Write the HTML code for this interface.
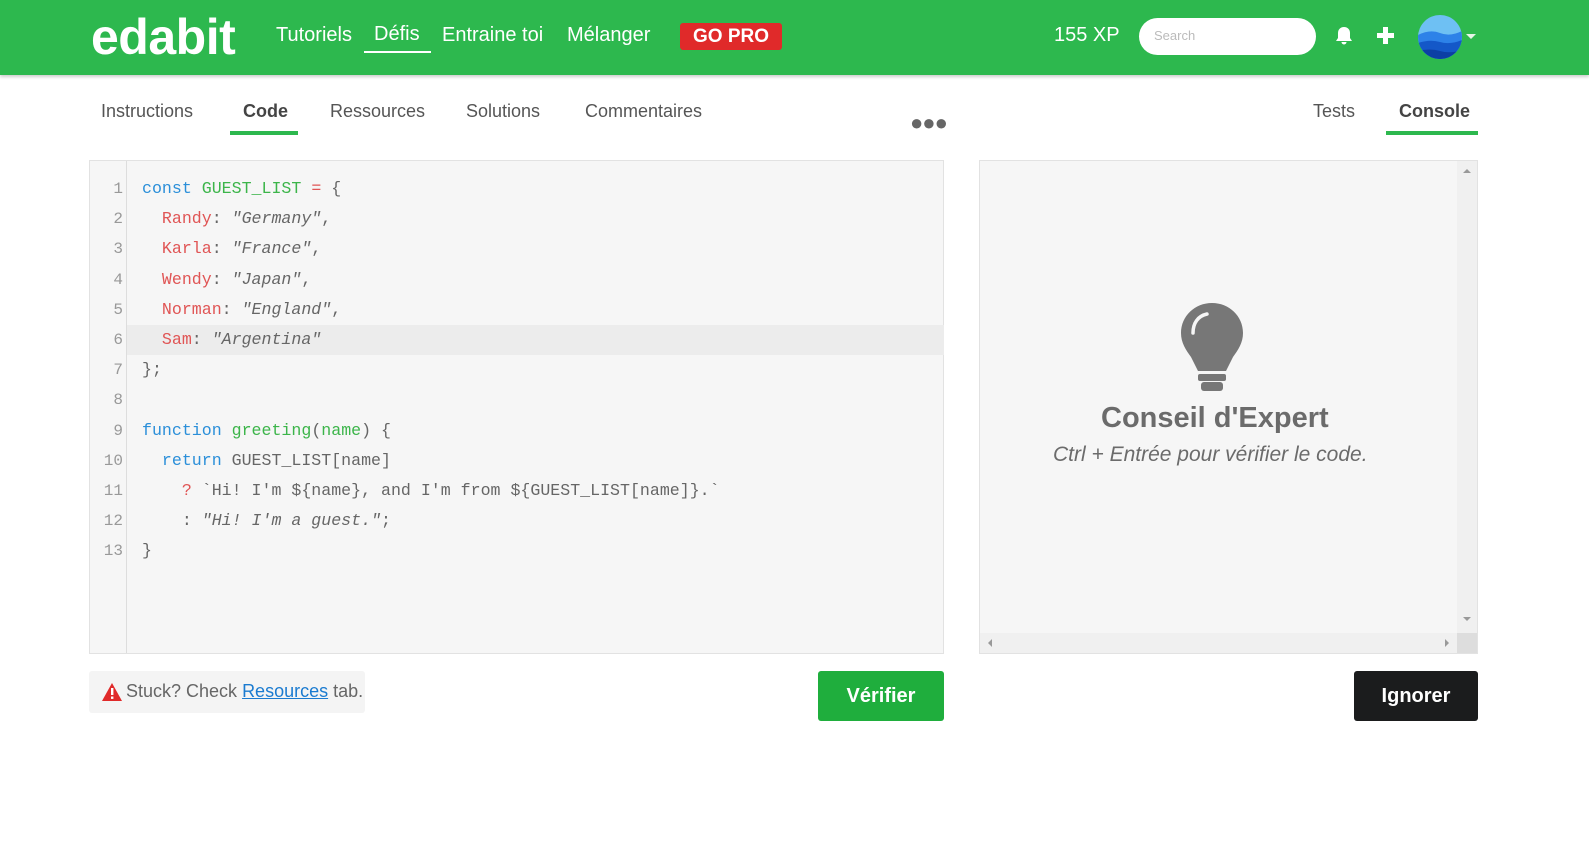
<!DOCTYPE html>
<html><head><meta charset="utf-8"><style>
*{margin:0;padding:0;box-sizing:border-box}
body{width:1589px;height:857px;background:#fff;font-family:"Liberation Sans",sans-serif;position:relative;overflow:hidden}
.hdr{position:absolute;left:0;top:0;width:1589px;height:75px;background:#2db84e;box-shadow:0 2px 3px rgba(0,0,0,.2)}
.abs{position:absolute;white-space:nowrap}
.logo{left:91px;top:8px;font-size:50px;font-weight:bold;color:#fff;letter-spacing:-0.5px}
.nav{top:24px;font-size:20px;color:#fff}
.gopro{left:680px;top:23px;width:102px;height:27px;background:#e02a2a;border-radius:3px;color:#fff;font-weight:bold;font-size:19px;text-align:center;line-height:27px}
.search{left:1139px;top:18px;width:177px;height:37px;background:#fff;border-radius:19px;color:#bbb;font-size:13px;padding:10px 15px}
.tab{top:101px;font-size:18px;color:#555}
.code{left:89px;top:160px;width:855px;height:494px;background:#f6f6f6;border:1px solid #e2e2e2}
.gut{position:absolute;left:0;top:0;width:37px;height:100%;border-right:1px solid #ddd}
.ln{position:absolute;left:0;width:33px;text-align:right;font-family:"Liberation Mono",monospace;font-size:16px;color:#999}
.cl{position:absolute;left:52px;font-family:"Liberation Mono",monospace;font-size:16.6px;color:#666;white-space:pre}
.k{color:#2b8fd9}.g{color:#3cb54a}.r{color:#e05555}.s{font-style:italic;color:#666}
.con{left:979px;top:160px;width:499px;height:494px;background:#f6f6f6;border:1px solid #e2e2e2}
.btn{height:50px;border-radius:3px;color:#fff;font-size:20px;font-weight:bold;text-align:center;line-height:50px}
</style></head><body>
<div class="hdr"></div>
<div class="abs logo">edabit</div>
<div class="abs nav" style="left:276px">Tutoriels</div>
<div class="abs nav" style="left:374px;top:23px">Défis</div>
<div class="abs" style="left:364px;top:51px;width:67px;height:2px;background:#fff"></div>
<div class="abs nav" style="left:442px">Entraine toi</div>
<div class="abs nav" style="left:567px">Mélanger</div>
<div class="abs gopro">GO PRO</div>
<div class="abs nav" style="left:1054px">155 XP</div>
<div class="abs search">Search</div>
<svg class="abs" style="left:1335px;top:26px" width="18" height="20" viewBox="0 0 18 20"><path d="M9 1c-4 0-6 3-6 6v5l-2 3h16l-2-3V7c0-3-2-6-6-6zM6.5 16a2.5 2.5 0 0 0 5 0z" fill="#fff"/></svg>
<svg class="abs" style="left:1377px;top:27px" width="17" height="17"><rect x="6" y="0" width="5" height="17" fill="#fff"/><rect x="0" y="6" width="17" height="5" fill="#fff"/></svg>
<svg class="abs" style="left:1418px;top:15px" width="62" height="44"><defs><clipPath id="c"><circle cx="22" cy="22" r="22"/></clipPath></defs><g clip-path="url(#c)"><rect width="44" height="44" fill="#6ec0f3"/><path d="M0 20q12-6 22-2t22-2v30H0z" fill="#2d82e8"/><path d="M0 28q12-4 22-1t22-2v20H0z" fill="#1458c8"/><path d="M0 36q12-3 22 0t22-1v10H0z" fill="#0c3fa4"/></g><path d="M48 19h10l-5 5z" fill="#e5f5e8"/></svg>
<div class="abs tab" style="left:101px">Instructions</div>
<div class="abs tab" style="left:243px;color:#444;font-weight:bold">Code</div>
<div class="abs" style="left:230px;top:131px;width:68px;height:4px;background:#2db84e"></div>
<div class="abs tab" style="left:330px">Ressources</div>
<div class="abs tab" style="left:466px">Solutions</div>
<div class="abs tab" style="left:585px">Commentaires</div>
<div class="abs" style="left:910px;top:110px;font-size:22px;color:#666;letter-spacing:-1px">●●●</div>
<div class="abs tab" style="left:1313px">Tests</div>
<div class="abs tab" style="left:1399px;color:#444;font-weight:bold">Console</div>
<div class="abs" style="left:1386px;top:131px;width:92px;height:4px;background:#2db84e"></div>
<div class="abs code">
<div style="position:absolute;left:37px;top:164px;width:817px;height:30px;background:#ececec"></div>
<div class="gut"></div>
<div class="ln" style="top:19px">1</div><div class="ln" style="top:49px">2</div><div class="ln" style="top:79px">3</div><div class="ln" style="top:110px">4</div><div class="ln" style="top:140px">5</div><div class="ln" style="top:170px">6</div><div class="ln" style="top:200px">7</div><div class="ln" style="top:230px">8</div><div class="ln" style="top:261px">9</div><div class="ln" style="top:291px">10</div><div class="ln" style="top:321px">11</div><div class="ln" style="top:351px">12</div><div class="ln" style="top:381px">13</div>
<div class="cl" style="top:18px"><span class="k">const</span> <span class="g">GUEST_LIST</span> <span class="r">=</span> {</div>
<div class="cl" style="top:48px">  <span class="r">Randy</span>: <span class="s">"Germany"</span>,</div>
<div class="cl" style="top:78px">  <span class="r">Karla</span>: <span class="s">"France"</span>,</div>
<div class="cl" style="top:109px">  <span class="r">Wendy</span>: <span class="s">"Japan"</span>,</div>
<div class="cl" style="top:139px">  <span class="r">Norman</span>: <span class="s">"England"</span>,</div>
<div class="cl" style="top:169px">  <span class="r">Sam</span>: <span class="s">"Argentina"</span></div>
<div class="cl" style="top:199px">};</div>
<div class="cl" style="top:260px"><span class="k">function</span> <span class="g">greeting</span>(<span class="g">name</span>) {</div>
<div class="cl" style="top:290px">  <span class="k">return</span> GUEST_LIST[name]</div>
<div class="cl" style="top:320px">    <span class="r">?</span> `Hi! I'm ${name}, and I'm from ${GUEST_LIST[name]}.`</div>
<div class="cl" style="top:350px">    : <span class="s">"Hi! I'm a guest."</span>;</div>
<div class="cl" style="top:380px">}</div>
</div>
<div class="abs con">
<div style="position:absolute;right:0;top:0;width:20px;height:472px;background:#f0f0f0"></div>
<div style="position:absolute;left:0;bottom:0;width:477px;height:20px;background:#f0f0f0"></div>
<div style="position:absolute;right:0;bottom:0;width:20px;height:20px;background:#ddd"></div>
<div style="position:absolute;right:6px;top:8px;border:4px solid transparent;border-bottom-color:#999;border-top:0"></div>
<div style="position:absolute;right:6px;top:456px;border:4px solid transparent;border-top-color:#999;border-bottom:0"></div>
<div style="position:absolute;left:8px;bottom:6px;border:4px solid transparent;border-right-color:#999;border-left:0"></div>
<div style="position:absolute;right:28px;bottom:6px;border:4px solid transparent;border-left-color:#999;border-right:0"></div>
</div>
<svg class="abs" style="left:1180px;top:302px" width="64" height="90" viewBox="0 0 64 90"><path d="M32 1C15 1 1 14 1 31c0 10 5 17 10 24l7 14h28l7-14c5-7 10-14 10-24C63 14 49 1 32 1z" fill="#777"/><rect x="18" y="72" width="28" height="7" rx="2" fill="#777"/><rect x="21" y="80" width="22" height="9" rx="3" fill="#777"/><path d="M13 31c0-10 5-17 14-19" stroke="#f6f6f6" stroke-width="3.5" fill="none" stroke-linecap="round"/></svg>
<div class="abs" style="left:1101px;top:402px;font-size:29px;font-weight:bold;color:#6b6b6b">Conseil d'Expert</div>
<div class="abs" style="left:1053px;top:443px;font-size:21px;font-style:italic;color:#6b6b6b">Ctrl + Entrée pour vérifier le code.</div>
<div class="abs" style="left:89px;top:671px;width:276px;height:42px;background:#f4f4f4;border-radius:3px"></div>
<svg class="abs" style="left:102px;top:683px" width="20" height="18"><path d="M10 0L20 18H0z" fill="#e02a2a"/><rect x="9" y="5" width="2.4" height="7" fill="#fff"/><rect x="9" y="13.5" width="2.4" height="2.4" fill="#fff"/></svg>
<div class="abs" style="left:126px;top:681px;font-size:18px;color:#666">Stuck? Check <span style="color:#1b7bd0;text-decoration:underline">Resources</span> tab.</div>
<div class="abs btn" style="left:818px;top:671px;width:126px;background:#1fae3d">Vérifier</div>
<div class="abs btn" style="left:1354px;top:671px;width:124px;background:#1b1c1d">Ignorer</div>
</body></html>
